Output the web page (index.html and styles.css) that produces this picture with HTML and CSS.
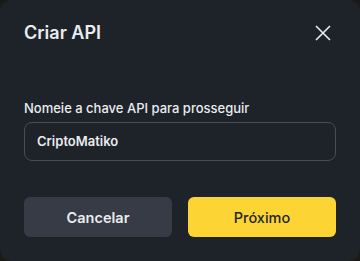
FILE: index.html
```html
<!DOCTYPE html>
<html lang="pt">
<head>
<meta charset="utf-8">
<link rel="stylesheet" href="styles.css">
</head>
<body>
<div class="dialog">
  <div class="header">
    <div class="title">Criar API</div>
    <button class="close" aria-label="Fechar">
      <svg width="24" height="24" viewBox="0 0 24 24"><path d="M5 5L19 19M19 5L5 19" stroke="#eaecef" stroke-width="1.6" fill="none"/></svg>
    </button>
  </div>
  <label class="label">Nomeie a chave API para prosseguir</label>
  <div class="input">CriptoMatiko</div>
  <div class="actions">
    <button class="btn btn-secondary">Cancelar</button>
    <button class="btn btn-primary">Próximo</button>
  </div>
</div>
</body>
</html>
```
FILE: styles.css
```css
html, body {
  margin: 0;
  padding: 0;
  background: #1a1b15;
}
body {
  width: 360px;
  height: 261px;
  font-family: Inter, "Noto Sans", sans-serif;
}
.dialog {
  box-sizing: border-box;
  width: 360px;
  height: 261px;
  background: #1e2329;
  border-radius: 12px;
  padding: 20px 24px 24px;
  display: flex;
  flex-direction: column;
}
.header {
  height: 26px;
  display: flex;
  align-items: center;
  justify-content: space-between;
}
.title {
  font-size: 18px;
  line-height: 24px;
  font-weight: 600;
  color: #eaecef;
}
.close {
  width: 24px;
  height: 24px;
  padding: 0;
  margin-right: 1px;
  border: 0;
  background: none;
  display: flex;
}
.label {
  margin-top: 52px;
  font-size: 13px;
  line-height: 20px;
  font-weight: 500;
  color: #eaecef;
}
.input {
  margin-top: 4px;
  box-sizing: border-box;
  height: 40px;
  border: 1px solid #474d57;
  border-radius: 8px;
  padding: 0 12px;
  display: flex;
  align-items: center;
  font-size: 13px;
  font-weight: 600;
  color: #eaecef;
}
.actions {
  margin-top: 36px;
  display: grid;
  grid-template-columns: 1fr 1fr;
  gap: 16px;
}
.btn {
  height: 40px;
  border: 0;
  border-radius: 6px;
  font-family: Inter, "Noto Sans", sans-serif;
  font-size: 14.5px;
}
.btn-secondary {
  background: #363b45;
  color: #eaecef;
  font-weight: 600;
}
.btn-primary {
  background: #fcd535;
  color: #202630;
  font-weight: 500;
}
```
